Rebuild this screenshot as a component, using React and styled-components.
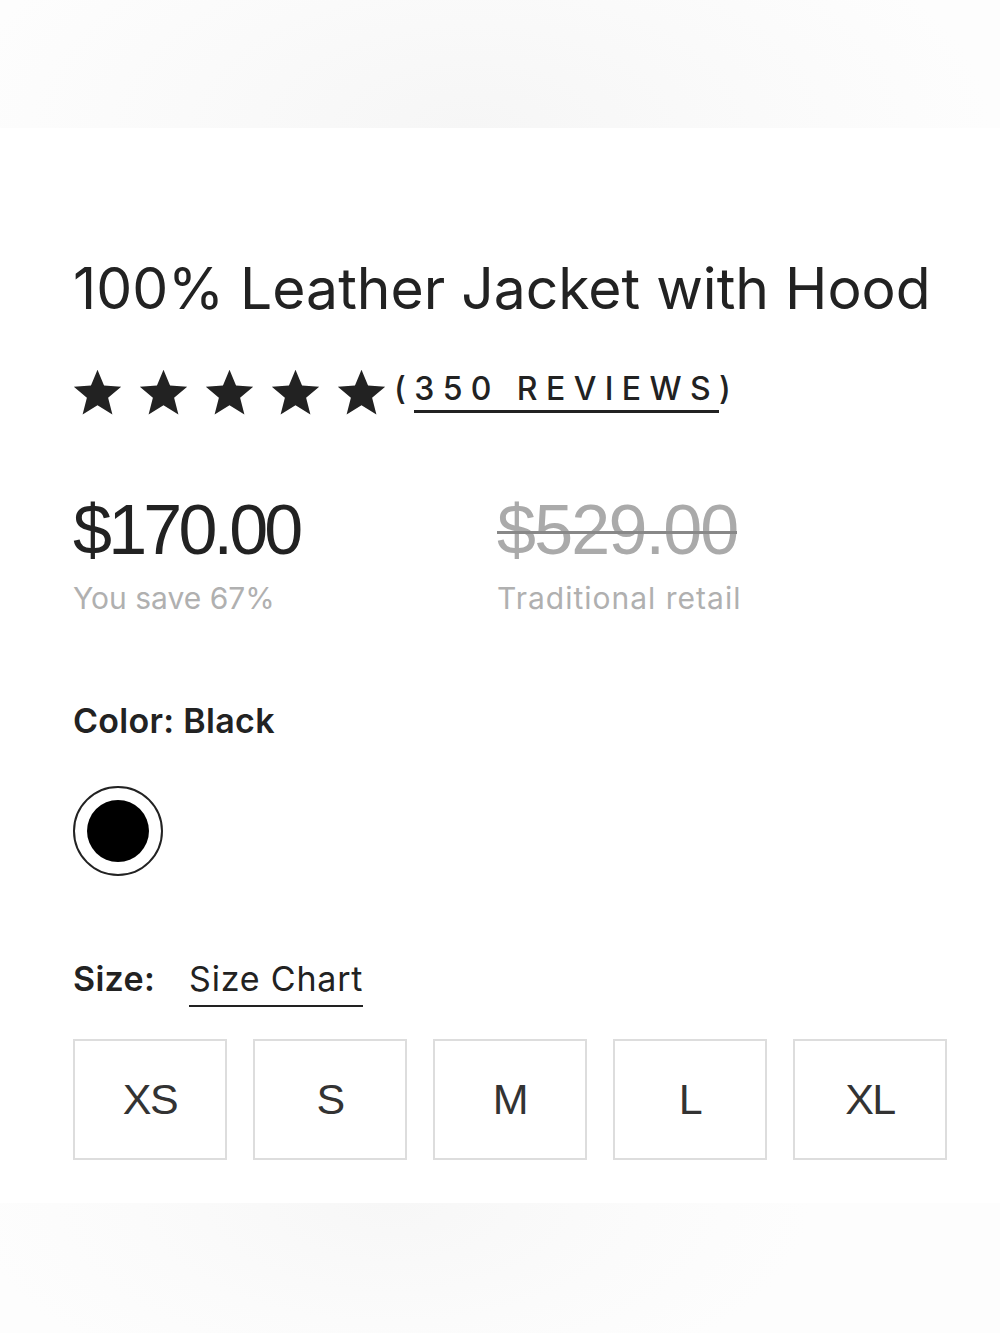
import React, { useState } from "react";
import styled, { createGlobalStyle } from "styled-components";

const GlobalStyle = createGlobalStyle`
  body {
    margin: 0;
    background: #fff;
    font-family: Inter, "Liberation Sans", sans-serif;
    color: #222;
  }
`;

const Page = styled.div`
  width: 1000px;
  min-height: 1333px;
  display: flex;
  flex-direction: column;
  background: #fff;
`;

const Fade = styled.div`
  height: ${(p) => p.h}px;
  background: ${(p) =>
    p.bottom
      ? "radial-gradient(ellipse 420px 200px at 390px 0px, #f7f7f7 0%, #fbfbfb 60%, #fdfdfd 100%)"
      : "radial-gradient(ellipse 520px 260px at 470px 130px, #f6f6f6 0%, #fafafa 55%, #fdfdfd 100%)"};
`;

const Details = styled.div`
  padding: 125px 53px 0 73px;
  display: flex;
  flex-direction: column;
`;

const Title = styled.h1`
  margin: 0;
  font-size: 57px;
  font-weight: 400;
  line-height: 72px;
  letter-spacing: 0;
  color: #222;
  white-space: nowrap;
`;

const Rating = styled.div`
  display: flex;
  align-items: center;
  margin-top: 42px;
  height: 50px;
`;

const Stars = styled.div`
  display: flex;
  gap: 17px;
  margin-right: 8px;
`;

const Reviews = styled.span`
  font-size: 32px;
  letter-spacing: 8.4px;
  font-weight: 500;
  color: #222;
  margin-top: -8px;
`;

const ReviewLink = styled.span`
  border-bottom: 3px solid #222;
  padding-bottom: 2px;
`;

const Prices = styled.div`
  display: grid;
  grid-template-columns: 424px auto;
  margin-top: 75px;
`;

const PriceCol = styled.div`
  display: flex;
  flex-direction: column;
`;

const Price = styled.span`
  font-family: "Liberation Sans", Arial, sans-serif;
  font-size: 70px;
  line-height: 76px;
  letter-spacing: ${(p) => (p.old ? "-1.8px" : "-3.8px")};
  color: ${(p) => (p.old ? "#aaa" : "#222")};
  position: relative;
  align-self: flex-start;
  ${(p) =>
    p.old &&
    `
    &::after {
      content: "";
      position: absolute;
      left: 0;
      right: 0;
      top: 51%;
      height: 3px;
      background: #888;
    }
  `}
`;

const Note = styled.span`
  font-family: Inter, "Liberation Sans", sans-serif;
  font-size: 30px;
  letter-spacing: ${(p) => (p.wide ? "1px" : "0")};
  color: #b0b0b0;
  margin-top: 12px;
`;

const Label = styled.div`
  font-size: 34px;
  font-weight: 600;
  letter-spacing: 0.3px;
  color: #222;
  display: flex;
  align-items: baseline;
  gap: 34px;
  margin-top: ${(p) => p.mt}px;
`;

const ChartLink = styled.span`
  font-weight: 400;
  letter-spacing: 0.8px;
  border-bottom: 2px solid #222;
  padding-bottom: 6px;
`;

const Swatch = styled.button`
  margin-top: 45px;
  width: 90px;
  height: 90px;
  border-radius: 50%;
  border: 2px solid #222;
  background: #fff;
  padding: 0;
  display: flex;
  align-items: center;
  justify-content: center;
  cursor: pointer;
  &::after {
    content: "";
    width: 62px;
    height: 62px;
    border-radius: 50%;
    background: ${(p) => p.color};
  }
`;

const SizeRow = styled.div`
  display: grid;
  grid-template-columns: repeat(5, 154px);
  gap: 26px;
  margin-top: 32px;
`;

const SizeBox = styled.button`
  height: 121px;
  border: 2px solid ${(p) => (p.active ? "#222" : "#ddd")};
  background: #fff;
  font-family: "Liberation Sans", Arial, sans-serif;
  font-size: 43px;
  letter-spacing: -1.5px;
  color: #333;
  cursor: pointer;
`;

const Star = () => (
  <svg width="49" height="47" viewBox="0 0 24 23">
    <path
      d="M12 0.4l3.2 7.7 8.4 0.6-6.4 5.4 2.1 8.2-7.3-4.5-7.3 4.5 2.1-8.2L0.4 8.7l8.4-0.6z"
      fill="#222"
    />
  </svg>
);

const sizes = ["XS", "S", "M", "L", "XL"];

export default function App() {
  const [size, setSize] = useState(null);

  return (
    <Page>
      <GlobalStyle />
      <Fade h={128} />
      <Details>
        <Title>100% Leather Jacket with Hood</Title>
        <Rating>
          <Stars>
            {[0, 1, 2, 3, 4].map((i) => (
              <Star key={i} />
            ))}
          </Stars>
          <Reviews>
            (<ReviewLink>350 REVIEWS</ReviewLink>)
          </Reviews>
        </Rating>
        <Prices>
          <PriceCol>
            <Price>$170.00</Price>
            <Note>You save 67%</Note>
          </PriceCol>
          <PriceCol>
            <Price old>$529.00</Price>
            <Note wide>Traditional retail</Note>
          </PriceCol>
        </Prices>
        <Label mt={84}>Color: Black</Label>
        <Swatch color="#000" aria-label="Black" />
        <Label mt={82}>
          Size:
          <ChartLink>Size Chart</ChartLink>
        </Label>
        <SizeRow>
          {sizes.map((s) => (
            <SizeBox key={s} active={size === s} onClick={() => setSize(s)}>
              {s}
            </SizeBox>
          ))}
        </SizeRow>
      </Details>
      <Fade bottom h={130} style={{ marginTop: "auto" }} />
    </Page>
  );
}
